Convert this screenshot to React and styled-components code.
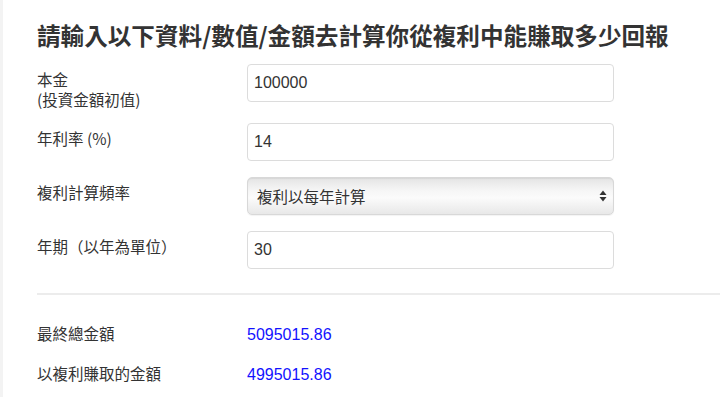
import React from "react";
import styled, { createGlobalStyle } from "styled-components";

const GlobalStyle = createGlobalStyle`
  html, body { margin: 0; padding: 0; background: #ffffff; }
  body {
    font-family: "Noto Sans CJK TC", "Liberation Sans", sans-serif;
    color: #333333;
  }
  * { box-sizing: border-box; }
`;

const Page = styled.div`
  border-left: 3px solid #f3f3f3;
  padding-left: 34px;
  min-height: 397px;
  overflow: hidden;
`;

const Title = styled.h2`
  margin: 21px 0 14px;
  font-size: 23.6px;
  line-height: 29px;
  font-weight: 700;
  color: #333333;
  font-family: "Noto Sans CJK TC", "Liberation Sans", sans-serif;
  white-space: nowrap;
`;

const Row = styled.div`
  display: grid;
  grid-template-columns: 210px 367px;
  align-items: start;
  margin-bottom: ${(p) => p.$gap ?? 16}px;
`;

const Label = styled.label`
  padding-top: 5px;
  font-size: 15.5px;
  line-height: 20px;
  color: #333333;
  font-family: "Noto Sans CJK TC", "Liberation Sans", sans-serif;
`;

const TextInput = styled.input`
  width: 100%;
  height: 38px;
  border: 1px solid #dcdcdc;
  border-radius: 4px;
  padding: 0 6px;
  font-family: "Liberation Sans", "Noto Sans CJK TC", sans-serif;
  font-size: 16px;
  color: #333333;
  background: #ffffff;
  outline: none;
`;

const SelectWrap = styled.div`
  position: relative;
  width: 100%;
  height: 38px;
`;

const Select = styled.select`
  appearance: none;
  -webkit-appearance: none;
  width: 100%;
  height: 38px;
  border: 1px solid #d8d8d8;
  border-radius: 5px;
  padding: 0 28px 0 9px;
  font-family: "Noto Sans CJK TC", "Liberation Sans", sans-serif;
  font-size: 15.5px;
  color: #333333;
  background: linear-gradient(#e4e4e4 0%, #f6f6f6 35%, #fbfbfb 55%, #e8e8e8 100%);
  box-shadow: inset 0 1px 1px rgba(0, 0, 0, 0.06), 0 1px 1px rgba(0, 0, 0, 0.05);
  outline: none;
`;

const Arrows = styled.svg`
  position: absolute;
  right: 7px;
  top: 13px;
  pointer-events: none;
`;

const Divider = styled.hr`
  border: 0;
  border-top: 2px solid #ececec;
  margin: 24px 0 20px;
`;

const ResultRow = styled.div`
  display: grid;
  grid-template-columns: 210px 1fr;
  align-items: baseline;
  height: 40px;
  padding-top: 7px;
`;

const ResultLabel = styled.span`
  color: #333333;
  font-size: 15.5px;
  font-family: "Noto Sans CJK TC", "Liberation Sans", sans-serif;
`;

const ResultValue = styled.span`
  color: #1212ff;
  font-size: 16px;
  font-family: "Liberation Sans", Arial, sans-serif;
`;

export default function App() {
  return (
    <>
      <GlobalStyle />
      <Page>
        <Title>請輸入以下資料/數值/金額去計算你從複利中能賺取多少回報</Title>
        <Row $gap={14}>
          <Label>
            本金
            <br />
            (投資金額初值)
          </Label>
          <TextInput defaultValue="100000" />
        </Row>
        <Row>
          <Label>年利率 (%)</Label>
          <TextInput defaultValue="14" />
        </Row>
        <Row>
          <Label>複利計算頻率</Label>
          <SelectWrap>
            <Select defaultValue="1">
              <option value="1">複利以每年計算</option>
              <option value="2">複利以每半年計算</option>
              <option value="4">複利以每季計算</option>
              <option value="12">複利以每月計算</option>
            </Select>
            <Arrows width="8" height="12" viewBox="0 0 8 12">
              <path d="M4 0.5 L7.5 5 L0.5 5 Z" fill="#333" />
              <path d="M4 11.5 L7.5 7 L0.5 7 Z" fill="#333" />
            </Arrows>
          </SelectWrap>
        </Row>
        <Row $gap={0}>
          <Label>年期（以年為單位）</Label>
          <TextInput defaultValue="30" />
        </Row>
        <Divider />
        <ResultRow>
          <ResultLabel>最終總金額</ResultLabel>
          <ResultValue>5095015.86</ResultValue>
        </ResultRow>
        <ResultRow>
          <ResultLabel>以複利賺取的金額</ResultLabel>
          <ResultValue>4995015.86</ResultValue>
        </ResultRow>
      </Page>
    </>
  );
}
